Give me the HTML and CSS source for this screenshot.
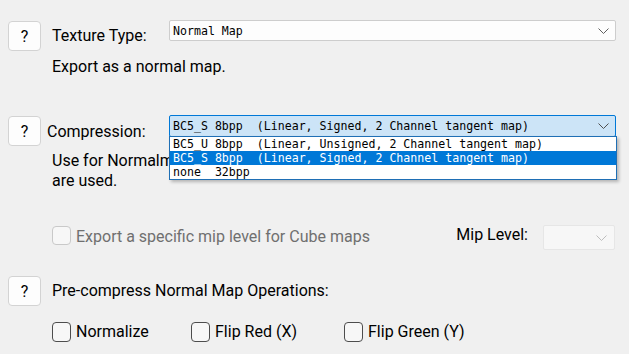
FILE: index.html
```html
<!DOCTYPE html>
<html lang="en">
<head>
    <meta charset="UTF-8">
    <title>Texture Export Options</title>
    <link rel="stylesheet" href="styles.css">
</head>
<body>
    <div class="panel">
        <div class="field-row">
            <button type="button" class="help-btn">?</button>
            <label class="field-label">Texture Type:</label>
            <div class="combo">
                <span class="combo-text">Normal Map</span>
                <svg class="chevron" width="11" height="6" viewBox="0 0 11 6"><polyline points="0.5,0.5 5.5,5.5 10.5,0.5" fill="none" stroke="#606060" stroke-width="1"/></svg>
            </div>
        </div>
        <p class="desc desc-type">Export as a normal map.</p>

        <div class="field-row row-compression">
            <button type="button" class="help-btn">?</button>
            <label class="field-label label-compression">Compression:</label>
            <div class="combo combo-open">
                <span class="combo-text">BC5_S 8bpp  (Linear, Signed, 2 Channel tangent map)</span>
                <svg class="chevron" width="11" height="6" viewBox="0 0 11 6"><polyline points="0.5,0.5 5.5,5.5 10.5,0.5" fill="none" stroke="#505050" stroke-width="1"/></svg>
                <ul class="combo-list">
                    <li>BC5_U 8bpp  (Linear, Unsigned, 2 Channel tangent map)</li>
                    <li class="selected">BC5_S 8bpp  (Linear, Signed, 2 Channel tangent map)</li>
                    <li>none  32bpp</li>
                </ul>
            </div>
        </div>
        <p class="desc desc-compression">Use for Normalmaps when two channel tangent space formats<br>are used.</p>

        <div class="mip-row">
            <label class="check check-disabled">
                <input type="checkbox" disabled>
                <span>Export a specific mip level for Cube maps</span>
            </label>
            <span class="mip-label">Mip Level:</span>
            <div class="combo combo-disabled">
                <span class="combo-text"></span>
                <svg class="chevron" width="11" height="6" viewBox="0 0 11 6"><polyline points="0.5,0.5 5.5,5.5 10.5,0.5" fill="none" stroke="#bdbdbd" stroke-width="1"/></svg>
            </div>
        </div>

        <div class="field-row row-ops">
            <button type="button" class="help-btn">?</button>
            <label class="field-label">Pre-compress Normal Map Operations:</label>
        </div>
        <div class="ops">
            <label class="check"><input type="checkbox"><span>Normalize</span></label>
            <label class="check"><input type="checkbox"><span>Flip Red (X)</span></label>
            <label class="check"><input type="checkbox"><span>Flip Green (Y)</span></label>
        </div>
    </div>
</body>
</html>
```

FILE: styles.css
```css
body { margin: 0; background-color: #f0f0f0; color: #000; font-family: Roboto, "Noto Sans", sans-serif; font-size: 16px; line-height: 20px; }
.panel { padding: 20px 13px 0 8px; }

.field-row { display: flex; align-items: flex-start; }
.help-btn {
    width: 33px;
    height: 30px;
    margin-top: 1px;
    padding: 0;
    box-sizing: border-box;
    border: 1px solid #d3d3d3;
    border-radius: 4px;
    background-color: #fdfdfd;
    color: #000;
    font-family: inherit;
    font-size: 16px;
    flex-shrink: 0;
}
.field-label { width: 117px; margin-left: 11px; margin-top: 6px; white-space: nowrap; }
.label-compression { width: 122px; margin-left: 6px; margin-top: 7px; }

.combo {
    position: relative;
    flex: 1;
    display: flex;
    align-items: center;
    justify-content: space-between;
    height: 21px;
    padding: 0 6px 0 3px;
    box-sizing: border-box;
    border: 1px solid #cdcdcd;
    border-radius: 2px;
    background-color: #fdfdfd;
}
.combo-text, .combo-list { font-family: "DejaVu Sans Mono", "Liberation Mono", monospace; font-size: 11.6px; color: #000; }
.combo-text, .combo-list li { white-space: pre; }
.combo-open { height: 22px; border-color: #0078d7; background-color: #cce4f7; }
.combo-list {
    position: absolute;
    top: 100%;
    left: -1px;
    right: -2px;
    margin: 0;
    padding: 0;
    list-style: none;
    border: 1px solid #1f6fb5;
    background-color: #fff;
    box-shadow: 2px 2px 3px rgba(0, 0, 0, 0.25);
    z-index: 2;
}
.combo-list li { height: 14px; line-height: 14px; padding-left: 3px; }
.combo-list .selected { background-color: #0078d7; color: #fff; }

.desc { margin: 6px 0 0 44px; }
.row-compression { margin-top: 38px; }
.desc-compression { margin-top: 5px; }

.mip-row { display: flex; align-items: flex-start; margin: 34px 0 0 44px; height: 25px; }
.mip-row .check { margin-top: 1px; }
.mip-row .check span { margin-top: 1px; }
.mip-label { margin-left: auto; margin-top: 0; }
.combo-disabled { flex: none; width: 72px; height: 25px; margin: 0 1px 0 15px; padding-right: 7px; border-color: #e6e6e6; background-color: #f7f7f7; }

.row-ops { margin-top: 25px; }
.row-ops .field-label { width: auto; }

.check { display: flex; align-items: flex-start; gap: 5px; white-space: nowrap; }
.check input {
    appearance: none;
    width: 19px;
    height: 20px;
    margin: 0;
    border: 1px solid #4d4d4d;
    border-radius: 4px;
    background-color: #f7f7f7;
}
.check-disabled input { height: 19px; border-color: #c9c9c9; background-color: #f7f7f7; }
.check-disabled span { color: #6f6f6f; }

.ops { display: grid; grid-template-columns: 139px 153px auto; margin: 16px 0 0 44px; }
```
